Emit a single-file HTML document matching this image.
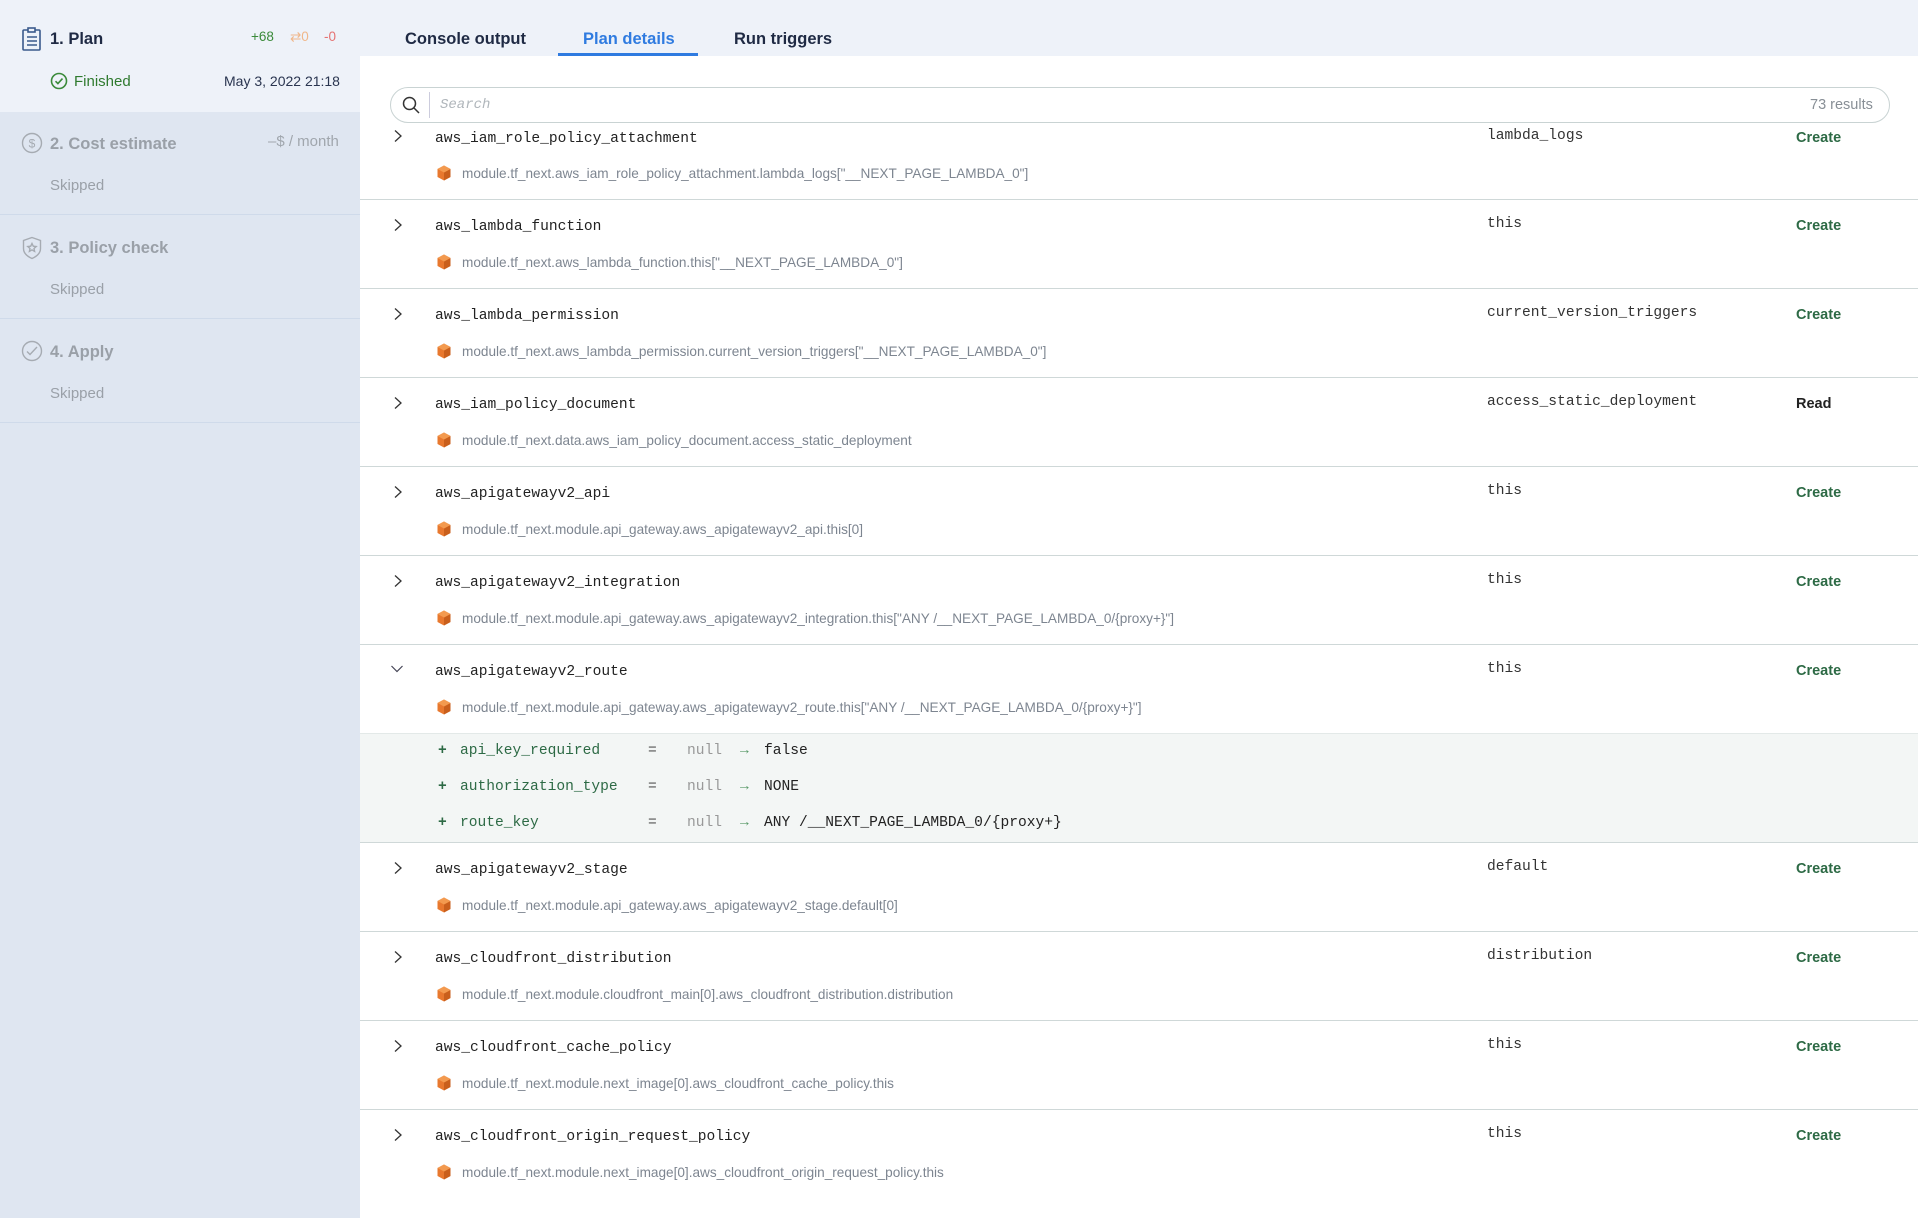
<!DOCTYPE html>
<html><head><meta charset="utf-8"><style>
*{margin:0;padding:0;box-sizing:border-box}
body{width:1918px;height:1218px;overflow:hidden;background:#fff;font-family:"Liberation Sans",sans-serif;position:relative}
.sb{position:absolute;left:0;top:0;width:360px;height:1218px;background:#dfe6f1}
.sec{position:absolute;left:0;width:360px;border-bottom:1px solid #cfdaea}
.t{position:absolute;left:50px;font-size:16.5px;font-weight:bold;color:#9aa0a8;line-height:20px}
.s{position:absolute;left:50px;font-size:15px;color:#9aa0a8;line-height:18px}
.ic{position:absolute;left:21px}
.hdr{position:absolute;left:360px;top:0;width:1558px;height:56px;background:#eef2f9}
.tab{position:absolute;top:28px;font-size:16.5px;font-weight:bold;color:#1f2a44;line-height:22px}
.abs{position:absolute}
.title{position:absolute;left:435px;font-family:"Liberation Mono",monospace;font-size:14.6px;color:#222;line-height:18px}
.path{position:absolute;left:462px;font-size:13.6px;color:#7d8590;line-height:16px;white-space:nowrap}
.cube{position:absolute;left:437px;width:14px;height:16px}
.chev{position:absolute;left:392px;width:12px;height:14px}
.name{position:absolute;left:1487px;font-family:"Liberation Mono",monospace;font-size:14.6px;color:#333;line-height:18px}
.act{position:absolute;left:1796px;font-size:14.5px;font-weight:bold;color:#2d6a45;line-height:18px}
.sep{position:absolute;left:360px;width:1558px;height:1px;background:#cfd8d8}
.attr{position:absolute;font-family:"Liberation Mono",monospace;font-size:14.6px;line-height:18px}
</style></head><body>
<div class="sb">
 <div class="sec" style="top:0;height:112px;background:#eef2f9;border:none"></div>
 <svg class="ic" style="left:21px;top:27px" width="22" height="24" viewBox="0 0 22 24" fill="none" stroke="#3a5a8c" stroke-width="1.6"><rect x="2" y="3" width="17" height="20" rx="1"/><rect x="7" y="1" width="7" height="4" fill="#eef2f9"/><path d="M6 10h10M6 14h10M6 18h10"/></svg>
 <div class="t" style="top:29px;color:#1f2a44">1. Plan</div>
 <div class="abs" style="left:251px;top:29px;font-size:13.5px;color:#3a8a3a">+68</div>
 <div class="abs" style="left:290px;top:29px;font-size:13.5px;color:#f0b78a">⇄0</div>
 <div class="abs" style="left:324px;top:29px;font-size:13.5px;color:#e57373">-0</div>
 <svg class="abs" style="left:50px;top:72px" width="18" height="18" viewBox="0 0 18 18" fill="none" stroke="#3a8a3a" stroke-width="1.6"><circle cx="9" cy="9" r="7.5"/><path d="M5.5 9.2l2.4 2.4 4.6-5"/></svg>
 <div class="abs" style="left:74px;top:73px;font-size:15px;color:#2f7a2f">Finished</div>
 <div class="abs" style="left:224px;top:73px;font-size:14px;color:#2a3550">May 3, 2022 21:18</div>

 <div class="sec" style="top:112px;height:103px"></div>
 <svg class="ic" style="top:132px" width="22" height="22" viewBox="0 0 22 22" fill="none" stroke="#a6abb2" stroke-width="1.4"><circle cx="11" cy="11" r="9.5"/><text x="11" y="15.5" font-size="12" text-anchor="middle" fill="#a6abb2" stroke="none" font-family="Liberation Sans">$</text></svg>
 <div class="t" style="top:134px">2. Cost estimate</div>
 <div class="abs" style="left:268px;top:133px;font-size:15px;color:#a0a6ad">–$ / month</div>
 <div class="s" style="top:177px">Skipped</div>

 <div class="sec" style="top:215px;height:104px"></div>
 <svg class="ic" style="top:236px" width="22" height="24" viewBox="0 0 22 24" fill="none" stroke="#a6abb2" stroke-width="1.4"><path d="M11 1.5l8.5 3v8c0 5-4 8-8.5 10-4.5-2-8.5-5-8.5-10v-8z"/><path d="M11 7.5l1.3 2.7 2.9.3-2.2 2 .6 2.9-2.6-1.5-2.6 1.5.6-2.9-2.2-2 2.9-.3z"/></svg>
 <div class="t" style="top:238px">3. Policy check</div>
 <div class="s" style="top:281px">Skipped</div>

 <div class="sec" style="top:319px;height:104px"></div>
 <svg class="ic" style="top:340px" width="22" height="22" viewBox="0 0 22 22" fill="none" stroke="#a6abb2" stroke-width="1.4"><circle cx="11" cy="11" r="9.5"/><path d="M6 11.5l3 3 7-7.5"/></svg>
 <div class="t" style="top:342px">4. Apply</div>
 <div class="s" style="top:385px">Skipped</div>
</div>

<div class="hdr"></div>
<div class="tab" style="left:405px">Console output</div>
<div class="tab" style="left:583px;color:#2f7be0">Plan details</div>
<div class="abs" style="left:558px;top:53px;width:140px;height:3px;background:#2f7be0"></div>
<div class="tab" style="left:734px">Run triggers</div>

<div class="abs" style="left:360px;top:733px;width:1558px;height:109px;background:#f3f6f5"></div>

<div class="sep" style="top:199px"></div><div class="sep" style="top:288px"></div><div class="sep" style="top:377px"></div><div class="sep" style="top:466px"></div><div class="sep" style="top:555px"></div><div class="sep" style="top:644px"></div><div class="sep" style="top:733px;background:#e3e9e8"></div><div class="sep" style="top:842px"></div><div class="sep" style="top:931px"></div><div class="sep" style="top:1020px"></div><div class="sep" style="top:1109px"></div>

<svg width="0" height="0" style="position:absolute"><defs>
<symbol id="cb" viewBox="0 0 14 16"><path d="M7 0.5l6.5 3.5v8L7 15.5 0.5 12V4z" fill="#e8782e"/><path d="M7 7.5l6.5-3.5v8L7 15.5z" fill="#c95f1c"/><path d="M7 0.5l6.5 3.5L7 7.5 0.5 4z" fill="#f39a4f"/></symbol>
<symbol id="cr" viewBox="0 0 12 14"><path d="M3 1.5l6 5.5-6 5.5" fill="none" stroke="#333" stroke-width="1.3"/></symbol>
<symbol id="cd" viewBox="0 0 14 12"><path d="M1.5 3l5.5 5.5L12.5 3" fill="none" stroke="#445" stroke-width="1.2"/></symbol>
</defs></svg>

<svg class="chev" style="top:129px"><use href="#cr"/></svg>
<div class="title" style="top:130px">aws_iam_role_policy_attachment</div>
<div class="name" style="top:127px">lambda_logs</div>
<div class="act" style="top:129px">Create</div>
<svg class="cube" style="top:165px"><use href="#cb"/></svg>
<div class="path" style="top:166px">module.tf_next.aws_iam_role_policy_attachment.lambda_logs["__NEXT_PAGE_LAMBDA_0"]</div>

<svg class="chev" style="top:218px"><use href="#cr"/></svg>
<div class="title" style="top:218px">aws_lambda_function</div>
<div class="name" style="top:215px">this</div>
<div class="act" style="top:217px">Create</div>
<svg class="cube" style="top:254px"><use href="#cb"/></svg>
<div class="path" style="top:255px">module.tf_next.aws_lambda_function.this["__NEXT_PAGE_LAMBDA_0"]</div>

<svg class="chev" style="top:307px"><use href="#cr"/></svg>
<div class="title" style="top:307px">aws_lambda_permission</div>
<div class="name" style="top:304px">current_version_triggers</div>
<div class="act" style="top:306px">Create</div>
<svg class="cube" style="top:343px"><use href="#cb"/></svg>
<div class="path" style="top:344px">module.tf_next.aws_lambda_permission.current_version_triggers["__NEXT_PAGE_LAMBDA_0"]</div>

<svg class="chev" style="top:396px"><use href="#cr"/></svg>
<div class="title" style="top:396px">aws_iam_policy_document</div>
<div class="name" style="top:393px">access_static_deployment</div>
<div class="act" style="top:395px;color:#222">Read</div>
<svg class="cube" style="top:432px"><use href="#cb"/></svg>
<div class="path" style="top:433px">module.tf_next.data.aws_iam_policy_document.access_static_deployment</div>

<svg class="chev" style="top:485px"><use href="#cr"/></svg>
<div class="title" style="top:485px">aws_apigatewayv2_api</div>
<div class="name" style="top:482px">this</div>
<div class="act" style="top:484px">Create</div>
<svg class="cube" style="top:521px"><use href="#cb"/></svg>
<div class="path" style="top:522px">module.tf_next.module.api_gateway.aws_apigatewayv2_api.this[0]</div>

<svg class="chev" style="top:574px"><use href="#cr"/></svg>
<div class="title" style="top:574px">aws_apigatewayv2_integration</div>
<div class="name" style="top:571px">this</div>
<div class="act" style="top:573px">Create</div>
<svg class="cube" style="top:610px"><use href="#cb"/></svg>
<div class="path" style="top:611px">module.tf_next.module.api_gateway.aws_apigatewayv2_integration.this["ANY /__NEXT_PAGE_LAMBDA_0/{proxy+}"]</div>

<svg class="chev" style="top:663px;left:390px;width:14px;height:12px"><use href="#cd"/></svg>
<div class="title" style="top:663px">aws_apigatewayv2_route</div>
<div class="name" style="top:660px">this</div>
<div class="act" style="top:662px">Create</div>
<svg class="cube" style="top:699px"><use href="#cb"/></svg>
<div class="path" style="top:700px">module.tf_next.module.api_gateway.aws_apigatewayv2_route.this["ANY /__NEXT_PAGE_LAMBDA_0/{proxy+}"]</div>

<div class="attr" style="top:742px;left:438px;color:#2d6a45;font-weight:bold">+</div><div class="attr" style="top:742px;left:460px;color:#2d6a45">api_key_required</div><div class="attr" style="top:742px;left:648px;color:#555">=</div><div class="attr" style="top:742px;left:687px;color:#999">null</div><div class="attr" style="top:742px;left:740px;color:#5a9a6a">→</div><div class="attr" style="top:742px;left:764px;color:#222">false</div>
<div class="attr" style="top:778px;left:438px;color:#2d6a45;font-weight:bold">+</div><div class="attr" style="top:778px;left:460px;color:#2d6a45">authorization_type</div><div class="attr" style="top:778px;left:648px;color:#555">=</div><div class="attr" style="top:778px;left:687px;color:#999">null</div><div class="attr" style="top:778px;left:740px;color:#5a9a6a">→</div><div class="attr" style="top:778px;left:764px;color:#222">NONE</div>
<div class="attr" style="top:814px;left:438px;color:#2d6a45;font-weight:bold">+</div><div class="attr" style="top:814px;left:460px;color:#2d6a45">route_key</div><div class="attr" style="top:814px;left:648px;color:#555">=</div><div class="attr" style="top:814px;left:687px;color:#999">null</div><div class="attr" style="top:814px;left:740px;color:#5a9a6a">→</div><div class="attr" style="top:814px;left:764px;color:#222">ANY /__NEXT_PAGE_LAMBDA_0/{proxy+}</div>

<svg class="chev" style="top:861px"><use href="#cr"/></svg>
<div class="title" style="top:861px">aws_apigatewayv2_stage</div>
<div class="name" style="top:858px">default</div>
<div class="act" style="top:860px">Create</div>
<svg class="cube" style="top:897px"><use href="#cb"/></svg>
<div class="path" style="top:898px">module.tf_next.module.api_gateway.aws_apigatewayv2_stage.default[0]</div>

<svg class="chev" style="top:950px"><use href="#cr"/></svg>
<div class="title" style="top:950px">aws_cloudfront_distribution</div>
<div class="name" style="top:947px">distribution</div>
<div class="act" style="top:949px">Create</div>
<svg class="cube" style="top:986px"><use href="#cb"/></svg>
<div class="path" style="top:987px">module.tf_next.module.cloudfront_main[0].aws_cloudfront_distribution.distribution</div>

<svg class="chev" style="top:1039px"><use href="#cr"/></svg>
<div class="title" style="top:1039px">aws_cloudfront_cache_policy</div>
<div class="name" style="top:1036px">this</div>
<div class="act" style="top:1038px">Create</div>
<svg class="cube" style="top:1075px"><use href="#cb"/></svg>
<div class="path" style="top:1076px">module.tf_next.module.next_image[0].aws_cloudfront_cache_policy.this</div>

<svg class="chev" style="top:1128px"><use href="#cr"/></svg>
<div class="title" style="top:1128px">aws_cloudfront_origin_request_policy</div>
<div class="name" style="top:1125px">this</div>
<div class="act" style="top:1127px">Create</div>
<svg class="cube" style="top:1164px"><use href="#cb"/></svg>
<div class="path" style="top:1165px">module.tf_next.module.next_image[0].aws_cloudfront_origin_request_policy.this</div>

<div class="abs" style="left:360px;top:56px;width:1558px;height:68px;background:linear-gradient(#fff 0,#fff 86%,rgba(255,255,255,0) 100%)"></div>
<div class="abs" style="left:390px;top:87px;width:1500px;height:36px;border:1px solid #c9d3d3;border-radius:18px;background:#fff"></div>
<svg class="abs" style="left:401px;top:95px" width="20" height="20" viewBox="0 0 20 20" fill="none" stroke="#333" stroke-width="1.5"><circle cx="8.5" cy="8.5" r="6"/><path d="M13 13l5 5"/></svg>
<div class="abs" style="left:429px;top:92px;width:1px;height:26px;background:#ccd"></div>
<div class="abs" style="left:440px;top:97px;font-size:14px;font-style:italic;color:#b0b6bb;font-family:'Liberation Mono',monospace">Search</div>
<div class="abs" style="left:1810px;top:97px;font-size:14.5px;color:#888f96">73 results</div>
</body></html>
